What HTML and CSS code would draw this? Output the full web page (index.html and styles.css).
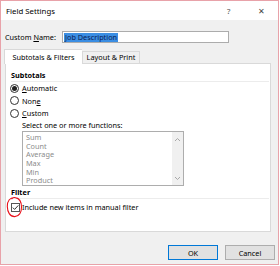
FILE: index.html
```html
<!DOCTYPE html>
<html lang="en">

<head>
    <meta charset="UTF-8">
    <title>Field Settings</title>
    <link rel="stylesheet" href="styles.css">
</head>

<body>
    <div class="dialog">
        <div class="titlebar">
            <span class="title">Field Settings</span>
            <span class="help">?</span>
            <span class="close">&#x2715;</span>
        </div>

        <div class="content">
            <div class="name-row">
                <span class="name-label">Custom <u>N</u>ame:</span>
                <div class="name-input"><span class="selected">Job Description</span></div>
            </div>

            <div class="tabs">
                <span class="tab active">Subtotals &amp; Filters</span>
                <span class="tab">Layout &amp; Print</span>
            </div>

            <div class="panel">
                <div class="group-title">Subtotals</div>
                <div class="radio-row"><span class="radio checked"></span><u>A</u>utomatic</div>
                <div class="radio-row"><span class="radio"></span>Non<u>e</u></div>
                <div class="radio-row"><span class="radio"></span><u>C</u>ustom</div>
                <div class="hint">Select one or more functions:</div>
                <div class="listbox">
                    <ul class="items">
                        <li>Sum</li>
                        <li>Count</li>
                        <li>Average</li>
                        <li>Max</li>
                        <li>Min</li>
                        <li>Product</li>
                    </ul>
                    <div class="scrollbar">
                        <svg width="7" height="5" viewBox="0 0 7 5"><path d="M1 4 L3.5 1.5 L6 4" fill="none" stroke="#a8a8a8" stroke-width="1"/></svg>
                        <svg width="7" height="5" viewBox="0 0 7 5"><path d="M1 1 L3.5 3.5 L6 1" fill="none" stroke="#a8a8a8" stroke-width="1"/></svg>
                    </div>
                </div>
                <div class="group-title">Filter</div>
                <div class="check-row">
                    <span class="checkbox">
                        <svg width="7" height="7" viewBox="0 0 7 7"><path d="M0.8 3.6 L2.6 5.4 L6.3 1.4" fill="none" stroke="#333" stroke-width="1"/></svg>
                    </span>
                    <span class="check-label">Include new items in manual filter</span>
                    <svg class="marker" width="17" height="22" viewBox="0 0 17 22">
                        <path d="M9 1.5 C4 1 1.2 5 1.3 10.5 C1.4 16 4 20.5 8.5 20.6 C13 20.7 15.6 16.5 15.5 11 C15.4 6 13 2.2 9.5 1.6 C8 1.3 6.5 2 5.5 3" fill="none" stroke="#e8101a" stroke-width="1.1"/>
                    </svg>
                </div>
            </div>

            <div class="buttons">
                <button class="btn default">OK</button>
                <button class="btn">Cancel</button>
            </div>
        </div>
    </div>
</body>

</html>
```

FILE: styles.css
```css
html {
    height: 100%;
}

body {
    margin: 0;
    padding: 0;
    background: #fff;
    font-family: 'Noto Sans', sans-serif;
    font-size: 7.3px;
    color: #000;
}

.dialog {
    box-sizing: border-box;
    width: 279px;
    height: 265px;
    border: solid 1px #e8a2a9;
    display: flex;
    flex-direction: column;
}

.titlebar {
    height: 19px;
    display: flex;
    align-items: center;
    background: #fff;
    padding-left: 5px;
    font-size: 7.8px;
}

.title {
    flex: 1;
}

.help {
    width: 10px;
    margin-right: 21px;
    color: #555;
}

.close {
    width: 12px;
    margin-right: 8px;
    color: #444;
}

.content {
    flex: 1;
    background: #f0f0f0;
    padding: 11px 3px 0 3px;
}

.name-row {
    display: flex;
    align-items: center;
    height: 12px;
}

.name-label {
    width: 57px;
    padding-left: 1px;
}

.name-input {
    box-sizing: border-box;
    width: 167px;
    height: 12px;
    border: solid 1px #acacac;
    background: #fff;
    display: flex;
    align-items: center;
    padding-left: 1px;
}

.selected {
    background: #3b8ee3;
    color: #0b1d55;
    line-height: 9px;
    padding: 0 1px;
}

.tabs {
    display: flex;
    align-items: flex-end;
    margin-top: 6px;
    height: 14px;
}

.tab {
    box-sizing: border-box;
    width: 58px;
    height: 12px;
    line-height: 11px;
    padding: 0;
    text-align: center;
    white-space: nowrap;
    border: solid 1px #d9d9d9;
    border-bottom: none;
    background: #f0f0f0;
}

.tab.active {
    width: 78px;
    height: 15px;
    line-height: 14px;
    background: #fff;
    position: relative;
    top: 1px;
    z-index: 2;
    border-right: none;
}

.panel {
    box-sizing: border-box;
    width: 266px;
    height: 169px;
    margin-left: 1px;
    border: solid 1px #d9d9d9;
    background: #fff;
}

.group-title {
    margin: 5px 1px 0 5px;
    height: 12px;
    line-height: 12px;
    font-weight: bold;
    border-bottom: solid 1px #ececec;
}

.radio-row {
    display: flex;
    align-items: center;
    height: 12.5px;
    padding-left: 4px;
}

.radio {
    box-sizing: border-box;
    width: 9px;
    height: 9px;
    border: solid 1px #333;
    border-radius: 50%;
    margin-right: 3px;
    display: flex;
    align-items: center;
    justify-content: center;
}

.radio.checked::after {
    content: "";
    width: 5px;
    height: 5px;
    border-radius: 50%;
    background: #222;
}

.hint {
    margin-left: 16px;
    height: 10px;
    line-height: 10px;
    margin-top: 0.5px;
}

.listbox {
    box-sizing: border-box;
    display: flex;
    width: 162px;
    height: 55px;
    margin: 1px 0 0 16px;
    border: solid 1px #adadad;
    background: #fff;
}

.items {
    flex: 1;
    list-style: none;
    margin: 0;
    padding: 1px 0 0 3px;
    color: #8c8c8c;
}

.items li {
    height: 8.7px;
    line-height: 8.7px;
}

.scrollbar {
    width: 11px;
    background: #f0f0f0;
    display: flex;
    flex-direction: column;
    justify-content: space-between;
    align-items: center;
    padding: 5px 0 4px 0;
}

.scrollbar svg {
    display: block;
}

.listbox + .group-title {
    margin-top: 0;
}

.check-row {
    position: relative;
    display: flex;
    align-items: center;
    height: 10px;
    margin-top: 3px;
    padding-left: 5px;
}

.checkbox {
    box-sizing: border-box;
    width: 9px;
    height: 9px;
    border: solid 1px #555;
    background: #fff;
    display: flex;
    align-items: center;
    justify-content: center;
    margin-right: 2px;
}

.checkbox svg {
    display: block;
}

.marker {
    position: absolute;
    left: 0;
    top: -6px;
}

.buttons {
    display: flex;
    justify-content: flex-end;
    gap: 7px;
    margin-top: 13px;
}

.btn {
    box-sizing: border-box;
    width: 50px;
    height: 15px;
    padding: 0;
    border: solid 1px #adadad;
    background: #e1e1e1;
    font-family: 'Noto Sans', sans-serif;
    font-size: 7.3px;
    color: #000;
}

.btn.default {
    border-color: #0078d7;
}
```
